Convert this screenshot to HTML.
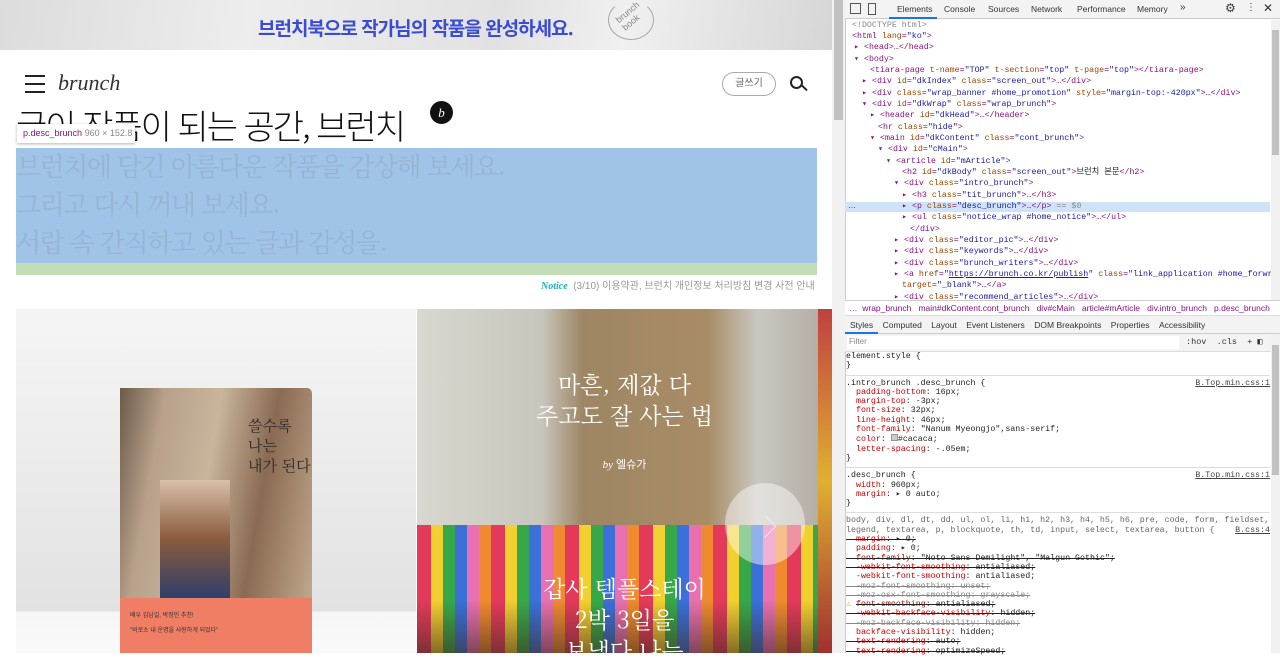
<!DOCTYPE html>
<html lang="ko"><head><meta charset="utf-8">
<style>
*{margin:0;padding:0;box-sizing:border-box}
body{width:1280px;height:653px;overflow:hidden;position:relative;background:#fff;font-family:"Liberation Sans","Noto Sans CJK KR",sans-serif}
.a{position:absolute}
.mono{font-family:"Liberation Mono","DejaVu Sans Mono",monospace;font-size:9.5px;white-space:nowrap}
.tag{color:#881280}.at{color:#994500}.av{color:#1a1aa6}.g{color:#888}
.ln{position:absolute;left:0;height:11px;line-height:11px}
.pr{color:#c80000}
.s{text-decoration:line-through}
</style></head><body>
<!-- left page -->
<div class="a" style="left:0;top:0;width:832px;height:50px;background:linear-gradient(100deg,#dcdcdc 0%,#ededed 30%,#e2e2e2 60%,#f0f0f0 75%,#d6d6d6 100%)"></div>
<div class="a" style="left:258px;top:14px;font-size:19px;font-weight:bold;color:#3a4bd6;letter-spacing:-1px;font-family:'Noto Sans CJK KR',sans-serif">브런치북으로 작가님의 작품을 완성하세요.</div>
<div class="a" style="left:608px;top:0;width:46px;height:40px;border:1px solid #aaa;border-radius:50%;border-top-color:transparent"></div>
<div class="a" style="left:617px;top:6px;font-size:9px;color:#888;transform:rotate(-40deg)">brunch<br>book</div>
<div class="a" style="left:25px;top:75px;width:20px;height:2px;background:#222;box-shadow:0 8px 0 #222,0 16px 0 #222"></div>
<div class="a" style="left:58px;top:70px;font-family:'Liberation Serif',serif;font-style:italic;font-size:22px;color:#333">brunch</div>
<div class="a" style="left:722px;top:72px;width:54px;height:24px;border:1px solid #aaa;border-radius:12px;font-size:10px;color:#666;text-align:center;line-height:22px">글쓰기</div>
<div class="a" style="left:790px;top:76px;width:13px;height:13px;border:2px solid #222;border-radius:50%"></div>
<div class="a" style="left:801px;top:87px;width:7px;height:2px;background:#222;transform:rotate(45deg)"></div>
<div class="a" style="left:16px;top:100px;font-size:34px;color:#111;font-weight:300;letter-spacing:-2px;font-family:'Noto Sans CJK KR',sans-serif">글이 작품이 되는 공간, 브런치</div>
<div class="a" style="left:430px;top:101px;width:23px;height:23px;border-radius:50%;background:#111;color:#fff;font-style:italic;font-size:13px;text-align:center;line-height:23px;font-family:'Liberation Serif',serif">b</div>
<div class="a" style="left:16px;top:148px;width:801px;height:115px;background:#a0c3e8"></div>
<div class="a" style="left:16px;top:263px;width:801px;height:12px;background:#c3ddb6"></div>
<div class="a" style="left:16px;top:147px;font-size:26px;line-height:38px;color:#98b3d2;letter-spacing:-1.5px;font-family:'Noto Serif CJK SC',serif">브런치에 담긴 아름다운 작품을 감상해 보세요.<br>그리고 다시 꺼내 보세요.<br>서랍 속 간직하고 있는 글과 감성을.</div>
<div class="a" style="left:17px;top:124px;width:118px;height:19px;background:#fff;box-shadow:0 1px 3px rgba(0,0,0,.3);font-size:9px;line-height:19px;padding-left:6px"><span style="color:#881280">p.desc_brunch</span> <span style="color:#888">960 × 152.8</span></div>
<div class="a" style="left:541px;top:277px;font-size:10px;color:#999;white-space:nowrap"><i style="color:#1fb5b5;font-family:'Liberation Serif',serif;font-weight:bold">Notice</i>&nbsp; (3/10) 이용약관, 브런치 개인정보 처리방침 변경 사전 안내</div>
<div class="a" style="left:16px;top:309px;width:400px;height:344px;background:linear-gradient(#f5f5f5,#e2e2e2 88%,#f6f6f6 88%,#fafafa)"></div>
<div class="a" style="left:120px;top:388px;width:192px;height:210px;background:linear-gradient(100deg,#6b5a4a 0%,#b8a08a 20%,#c9b49c 45%,#8a6a52 70%,#bfa88c 100%);border-radius:0 5px 0 0"></div>
<div class="a" style="left:160px;top:480px;width:70px;height:118px;background:linear-gradient(#d8c0a8,#8a5b3e 50%,#2f3f6a)"></div>
<div class="a" style="left:248px;top:416px;font-size:15px;line-height:20px;color:#2a2a2a;font-family:'Noto Serif CJK SC',serif">쓸수록<br>나는<br>내가 된다</div>
<div class="a" style="left:120px;top:598px;width:192px;height:55px;background:#f07e64;font-size:6px;color:#333;padding:12px 10px">배우 김남길, 박정민 추천!<br><br>"비로소 내 운명을 사랑하게 되었다"</div>
<div class="a" style="left:417px;top:309px;width:415px;height:216px;background:linear-gradient(90deg,#d8d8d0 0%,#c8c6bc 30%,#9e8664 40%,#a88c66 70%,#c9c8c0 82%,#b0a8a0 100%)"></div>
<div class="a" style="left:417px;top:525px;width:415px;height:128px;background:repeating-linear-gradient(90deg,#e43a5a 0 14px,#f2d030 14px 26px,#37a84a 26px 38px,#3a70d8 38px 50px,#e870b0 50px 62px,#f08a30 62px 74px)"></div>
<div class="a" style="left:417px;top:600px;width:415px;height:53px;background:linear-gradient(transparent,rgba(60,40,30,.6))"></div>
<div class="a" style="left:417px;top:368px;width:415px;text-align:center;font-size:23px;line-height:31px;color:#fff;font-family:'Noto Serif CJK SC',serif">마흔, 제값 다<br>주고도 잘 사는 법</div>
<div class="a" style="left:417px;top:456px;width:415px;text-align:center;font-size:11px;color:#fff"><i style="font-family:'Liberation Serif',serif">by</i> 엘슈가</div>
<div class="a" style="left:417px;top:572px;width:415px;text-align:center;font-size:23px;line-height:31px;color:#fff;font-family:'Noto Serif CJK SC',serif">갑사 템플스테이<br>2박 3일을<br>보냈다 나는</div>
<div class="a" style="left:725px;top:483px;width:80px;height:82px;border-radius:50%;background:rgba(255,255,255,.45)"></div>
<div class="a" style="left:757px;top:510px;width:16px;height:16px;border-right:1px solid #eee;border-top:1px solid #eee;transform:rotate(45deg) translate(6px,6px)"></div>
<div class="a" style="left:818px;top:309px;width:14px;height:344px;background:linear-gradient(#c04040,#e0b030,#a03030)"></div>
<div class="a" style="left:832px;top:0;width:13px;height:653px;background:#f1f1f1"></div>
<div class="a" style="left:834px;top:0;width:9px;height:120px;background:#c1c1c1"></div>
<!-- devtools -->
<div class="a" style="left:845px;top:0;width:435px;height:653px;background:#fff;border-left:1px solid #ccc"></div>
<div class="a" style="left:845px;top:0;width:435px;height:19px;background:#f3f3f3;border-bottom:1px solid #ccc;font-size:9px;color:#333"></div>
<div class="a" style="left:850px;top:3px;width:11px;height:11px;border:1px solid #555"></div>
<div class="a" style="left:868px;top:3px;width:8px;height:12px;border:1px solid #555"></div>
<div class="a" style="left:897px;top:4px;font-size:8.5px;color:#333;white-space:nowrap">Elements</div>
<div class="a" style="left:889px;top:17px;width:48px;height:2px;background:#1a73e8"></div>
<div class="a" style="left:944px;top:4px;font-size:8.5px;color:#333">Console</div>
<div class="a" style="left:988px;top:4px;font-size:8.5px;color:#333">Sources</div>
<div class="a" style="left:1031px;top:4px;font-size:8.5px;color:#333">Network</div>
<div class="a" style="left:1077px;top:4px;font-size:8.5px;color:#333">Performance</div>
<div class="a" style="left:1137px;top:4px;font-size:8.5px;color:#333">Memory</div>
<div class="a" style="left:1180px;top:2px;font-size:10px;color:#333">»</div>
<div class="a" style="left:1225px;top:1px;font-size:12px;color:#333">⚙</div>
<div class="a" style="left:1246px;top:2px;font-size:10px;color:#333">⋮</div>
<div class="a" style="left:1263px;top:1px;font-size:12px;color:#333">✕</div>
<div class="a" style="left:845px;top:202px;width:425px;height:10px;background:#cfe3f8"></div>
<div class="a" style="left:848px;top:201px;font-size:8px;color:#333">…</div>
<div class="a mono" style="left:852px;top:20px;width:420px;height:280px;overflow:hidden;font-size:8.3px">
<div class="ln g" style="top:0">&lt;!DOCTYPE html&gt;</div>
<div class="ln tag" style="top:11px">&lt;html <span class="at">lang</span>=<span class="av">"ko"</span>&gt;</div>
<div class="ln tag" style="top:22px;left:2px">▸ &lt;head&gt;…&lt;/head&gt;</div>
<div class="ln tag" style="top:34px;left:2px">▾ &lt;body&gt;</div>
<div class="ln tag" style="top:45px;left:18px">&lt;tiara-page <span class="at">t-name</span>=<span class="av">"TOP"</span> <span class="at">t-section</span>=<span class="av">"top"</span> <span class="at">t-page</span>=<span class="av">"top"</span>&gt;&lt;/tiara-page&gt;</div>
<div class="ln tag" style="top:56px;left:10px">▸ &lt;div <span class="at">id</span>=<span class="av">"dkIndex"</span> <span class="at">class</span>=<span class="av">"screen_out"</span>&gt;…&lt;/div&gt;</div>
<div class="ln tag" style="top:68px;left:10px">▸ &lt;div <span class="at">class</span>=<span class="av">"wrap_banner #home_promotion"</span> <span class="at">style</span>=<span class="av">"margin-top:-420px"</span>&gt;…&lt;/div&gt;</div>
<div class="ln tag" style="top:79px;left:10px">▾ &lt;div <span class="at">id</span>=<span class="av">"dkWrap"</span> <span class="at">class</span>=<span class="av">"wrap_brunch"</span>&gt;</div>
<div class="ln tag" style="top:90px;left:18px">▸ &lt;header <span class="at">id</span>=<span class="av">"dkHead"</span>&gt;…&lt;/header&gt;</div>
<div class="ln tag" style="top:102px;left:26px">&lt;hr <span class="at">class</span>=<span class="av">"hide"</span>&gt;</div>
<div class="ln tag" style="top:113px;left:18px">▾ &lt;main <span class="at">id</span>=<span class="av">"dkContent"</span> <span class="at">class</span>=<span class="av">"cont_brunch"</span>&gt;</div>
<div class="ln tag" style="top:124px;left:26px">▾ &lt;div <span class="at">id</span>=<span class="av">"cMain"</span>&gt;</div>
<div class="ln tag" style="top:136px;left:34px">▾ &lt;article <span class="at">id</span>=<span class="av">"mArticle"</span>&gt;</div>
<div class="ln tag" style="top:147px;left:50px">&lt;h2 <span class="at">id</span>=<span class="av">"dkBody"</span> <span class="at">class</span>=<span class="av">"screen_out"</span>&gt;<span style="color:#222">브런치 본문</span>&lt;/h2&gt;</div>
<div class="ln tag" style="top:158px;left:42px">▾ &lt;div <span class="at">class</span>=<span class="av">"intro_brunch"</span>&gt;</div>
<div class="ln tag" style="top:170px;left:50px">▸ &lt;h3 <span class="at">class</span>=<span class="av">"tit_brunch"</span>&gt;…&lt;/h3&gt;</div>
<div class="ln tag" style="top:181px;left:50px">▸ &lt;p <span class="at">class</span>=<span class="av">"desc_brunch"</span>&gt;…&lt;/p&gt; <span class="g">== $0</span></div>
<div class="ln tag" style="top:192px;left:50px">▸ &lt;ul <span class="at">class</span>=<span class="av">"notice_wrap #home_notice"</span>&gt;…&lt;/ul&gt;</div>
<div class="ln tag" style="top:204px;left:58px">&lt;/div&gt;</div>
<div class="ln tag" style="top:215px;left:42px">▸ &lt;div <span class="at">class</span>=<span class="av">"editor_pic"</span>&gt;…&lt;/div&gt;</div>
<div class="ln tag" style="top:226px;left:42px">▸ &lt;div <span class="at">class</span>=<span class="av">"keywords"</span>&gt;…&lt;/div&gt;</div>
<div class="ln tag" style="top:238px;left:42px">▸ &lt;div <span class="at">class</span>=<span class="av">"brunch_writers"</span>&gt;…&lt;/div&gt;</div>
<div class="ln tag" style="top:249px;left:42px">▸ &lt;a <span class="at">href</span>=<span class="av">"<u>https://brunch.co.kr/publish</u>"</span> <span class="at">class</span>=<span class="av">"link_application #home_forwriter"</span></div>
<div class="ln tag" style="top:260px;left:50px"><span class="at">target</span>=<span class="av">"_blank"</span>&gt;…&lt;/a&gt;</div>
<div class="ln tag" style="top:272px;left:42px">▸ &lt;div <span class="at">class</span>=<span class="av">"recommend_articles"</span>&gt;…&lt;/div&gt;</div>
</div>
<div class="a" style="left:1271px;top:20px;width:9px;height:280px;background:#f1f1f1"></div>
<div class="a" style="left:1272px;top:30px;width:7px;height:125px;background:#c1c1c1"></div>
<div class="a" style="left:845px;top:300px;width:435px;height:16px;background:#fff;border-top:1px solid #ccc;border-bottom:1px solid #ddd;font-size:8.5px;color:#881280;white-space:nowrap;padding:2px 0 0 4px">…&nbsp; wrap_brunch &nbsp;&nbsp;main#dkContent.cont_brunch &nbsp;&nbsp;div#cMain &nbsp;&nbsp;article#mArticle &nbsp;&nbsp;div.intro_brunch &nbsp;&nbsp;p.desc_brunch</div>
<div class="a" style="left:845px;top:316px;width:435px;height:18px;background:#f3f3f3;border-bottom:1px solid #ccc;font-size:8.5px;color:#333;white-space:nowrap;padding:4px 0 0 5px">Styles &nbsp;&nbsp;&nbsp;Computed &nbsp;&nbsp;&nbsp;Layout &nbsp;&nbsp;&nbsp;Event Listeners &nbsp;&nbsp;&nbsp;DOM Breakpoints &nbsp;&nbsp;&nbsp;Properties &nbsp;&nbsp;&nbsp;Accessibility</div>
<div class="a" style="left:845px;top:332px;width:33px;height:2px;background:#1a73e8"></div>
<div class="a" style="left:845px;top:334px;width:426px;height:18px;background:#f3f3f3;border-bottom:1px solid #ddd"></div>
<div class="a" style="left:847px;top:336px;width:332px;height:13px;background:#fff;font-size:8px;color:#888;padding:1px 0 0 2px">Filter</div>
<div class="a mono" style="left:1186px;top:337px;font-size:8.5px;color:#333">:hov &nbsp;.cls &nbsp;+ ◧</div>
<div class="a mono" style="left:846px;top:352px;width:424px;font-size:8.3px;line-height:9.3px;color:#222">
<div>element.style {</div><div>}</div>
<div style="border-top:1px solid #ddd;margin-top:4px;padding-top:3px">.intro_brunch .desc_brunch { <span style="float:right;text-decoration:underline;color:#444">B.Top.min.css:1</span></div>
<div>&nbsp;&nbsp;<span class="pr">padding-bottom</span>: 16px;</div>
<div>&nbsp;&nbsp;<span class="pr">margin-top</span>: -3px;</div>
<div>&nbsp;&nbsp;<span class="pr">font-size</span>: 32px;</div>
<div>&nbsp;&nbsp;<span class="pr">line-height</span>: 46px;</div>
<div>&nbsp;&nbsp;<span class="pr">font-family</span>: "Nanum Myeongjo",sans-serif;</div>
<div>&nbsp;&nbsp;<span class="pr">color</span>: <span style="display:inline-block;width:7px;height:7px;background:#cacaca;border:1px solid #999"></span>#cacaca;</div>
<div>&nbsp;&nbsp;<span class="pr">letter-spacing</span>: -.05em;</div>
<div>}</div>
<div style="border-top:1px solid #ddd;margin-top:4px;padding-top:3px">.desc_brunch { <span style="float:right;text-decoration:underline;color:#444">B.Top.min.css:1</span></div>
<div>&nbsp;&nbsp;<span class="pr">width</span>: 960px;</div>
<div>&nbsp;&nbsp;<span class="pr">margin</span>: ▸ 0 auto;</div>
<div>}</div>
<div style="border-top:1px solid #ddd;margin-top:4px;padding-top:3px;color:#666">body, div, dl, dt, dd, ul, ol, li, h1, h2, h3, h4, h5, h6, pre, code, form, fieldset, <span style="float:right;text-decoration:underline;color:#444">B.css:4</span></div>
<div style="color:#666">legend, textarea, p, blockquote, th, td, input, select, textarea, button {</div>
<div class="s">&nbsp;&nbsp;<span class="pr">margin</span>: ▸ 0;</div>
<div>&nbsp;&nbsp;<span class="pr">padding</span>: ▸ 0;</div>
<div class="s">&nbsp;&nbsp;<span class="pr">font-family</span>: "Noto Sans Demilight", "Malgun Gothic";</div>
<div class="s">&nbsp;&nbsp;<span class="pr">-webkit-font-smoothing</span>: antialiased;</div>
<div>&nbsp;&nbsp;<span class="pr">-webkit-font-smoothing</span>: antialiased;</div>
<div class="s g">&nbsp;&nbsp;-moz-font-smoothing: unset;</div>
<div class="s g">&nbsp;&nbsp;-moz-osx-font-smoothing: grayscale;</div>
<div><span style="color:#e8a000">⚠</span> <span class="s"><span class="pr">font-smoothing</span>: antialiased;</span></div>
<div class="s">&nbsp;&nbsp;<span class="pr">-webkit-backface-visibility</span>: hidden;</div>
<div class="s g">&nbsp;&nbsp;-moz-backface-visibility: hidden;</div>
<div>&nbsp;&nbsp;<span class="pr">backface-visibility</span>: hidden;</div>
<div class="s">&nbsp;&nbsp;<span class="pr">text-rendering</span>: auto;</div>
<div class="s">&nbsp;&nbsp;<span class="pr">text-rendering</span>: optimizeSpeed;</div>
</div>
<div class="a" style="left:1271px;top:334px;width:9px;height:319px;background:#f1f1f1"></div>
<div class="a" style="left:1272px;top:345px;width:7px;height:130px;background:#c1c1c1"></div>
</body></html>
